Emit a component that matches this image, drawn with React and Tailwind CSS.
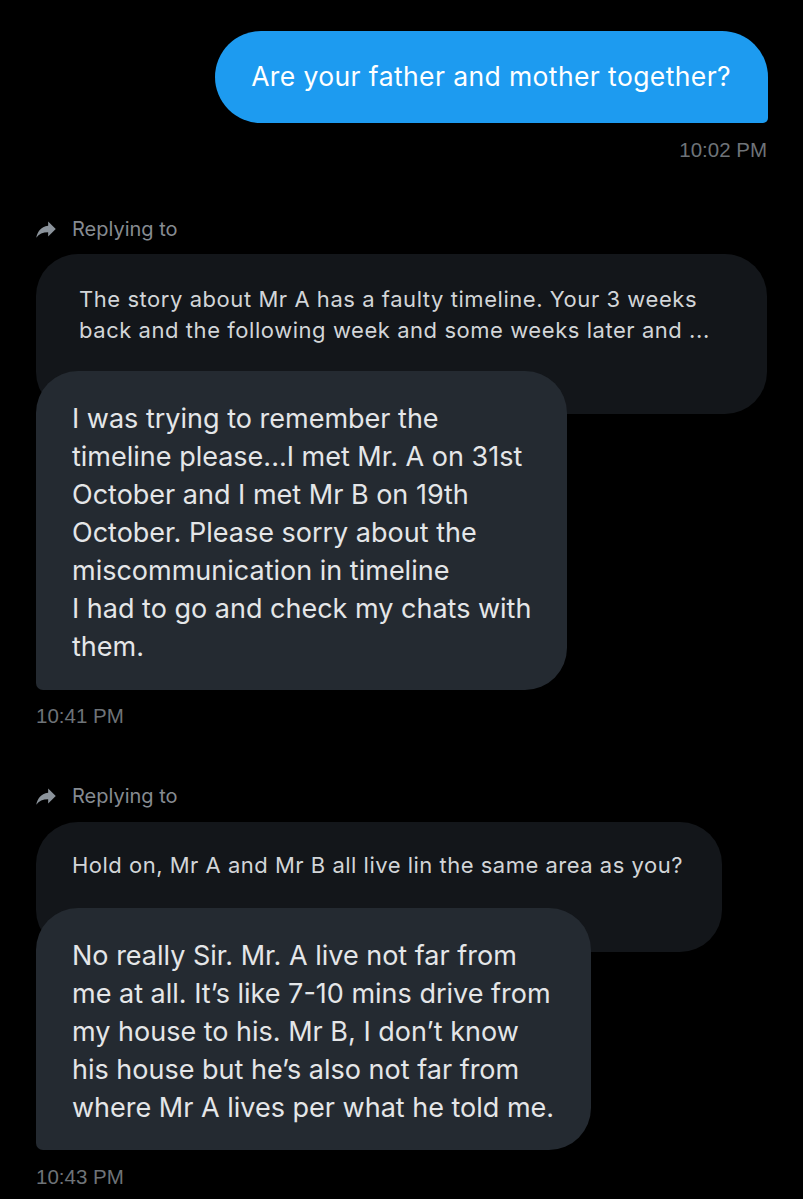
import React from 'react';

const sans = { fontFamily: 'Inter, "Noto Sans", sans-serif' };

function ForwardIcon() {
  return (
    <svg width="26" height="26" viewBox="0 0 24 24" className="shrink-0">
      <path d="M14 9V5l7 7-7 7v-4.1c-5 0-8.5 1.6-11 5.1 1-5 4-10 11-11z" fill="#8b939b" />
    </svg>
  );
}

function ReplyingTo() {
  return (
    <div className="flex items-center gap-[13px] pl-[33px] h-[30px]">
      <ForwardIcon />
      <span className="text-[20px] text-[#868b91]" style={sans}>Replying to</span>
    </div>
  );
}

function Stamp({ children, right }) {
  return (
    <div
      className={`text-[20.5px] leading-[22px] text-[#6e7378] ${right ? 'text-right pr-[36px]' : 'pl-[36px]'}`}
      style={{ fontFamily: '"Liberation Sans", Arial, sans-serif' }}
    >
      {children}
    </div>
  );
}

export default function App() {
  return (
    <div className="w-[803px] h-[1199px] bg-black overflow-hidden" style={sans}>
      {/* sent */}
      <div className="pt-[31px] flex justify-end pr-[35px]">
        <div className="bg-[#1d9bf0] rounded-[46px] rounded-br-[5px] h-[92px] flex items-center pl-[36px] pr-[37px]">
          <span className="text-[26.5px] text-white tracking-[0.4px]">Are your father and mother together?</span>
        </div>
      </div>
      <div className="mt-[16px]">
        <Stamp right>10:02 PM</Stamp>
      </div>

      {/* first reply */}
      <div className="mt-[53px]">
        <ReplyingTo />
      </div>
      <div className="mt-[10px] px-[36px]">
        <div className="w-[731px] h-[160px] bg-[#13161a] rounded-[42px] pl-[43px] pt-[30px]">
          <p className="text-[22px] leading-[31px] tracking-[0.55px] text-[#d2d5d8] whitespace-nowrap">
            The story about Mr A has a faulty timeline. Your 3 weeks<br />
            back and the following week and some weeks later and ...
          </p>
        </div>
        <div className="-mt-[43px] w-[531px] bg-[#242a31] rounded-[42px] rounded-bl-[7px] pl-[36px] pr-[10px] pt-[29px] pb-[24px]">
          <p className="text-[27px] leading-[38px] text-[#e4e6e8] whitespace-nowrap">
            I was trying to remember the<br />
            timeline please...I met Mr. A on 31st<br />
            October and I met Mr B on 19th<br />
            October. Please sorry about the<br />
            miscommunication in timeline<br />
            I had to go and check my chats with<br />
            them.
          </p>
        </div>
      </div>
      <div className="mt-[15px]">
        <Stamp>10:41 PM</Stamp>
      </div>

      {/* second reply */}
      <div className="mt-[54px]">
        <ReplyingTo />
      </div>
      <div className="mt-[11px] px-[36px]">
        <div className="w-[686px] h-[130px] bg-[#13161a] rounded-[42px] pl-[36px] pt-[28px]">
          <p className="text-[22px] leading-[31px] tracking-[0.5px] text-[#d2d5d8] whitespace-nowrap">
            Hold on, Mr A and Mr B all live lin the same area as you?
          </p>
        </div>
        <div className="-mt-[44px] w-[555px] bg-[#242a31] rounded-[42px] rounded-bl-[7px] pl-[36px] pr-[10px] pt-[29px] pb-[23px]">
          <p className="text-[27px] leading-[38px] text-[#e4e6e8] whitespace-nowrap">
            No really Sir. Mr. A live not far from<br />
            me at all. It’s like 7-10 mins drive from<br />
            my house to his. Mr B, I don’t know<br />
            his house but he’s also not far from<br />
            where Mr A lives per what he told me.
          </p>
        </div>
      </div>
      <div className="mt-[16px]">
        <Stamp>10:43 PM</Stamp>
      </div>
    </div>
  );
}
